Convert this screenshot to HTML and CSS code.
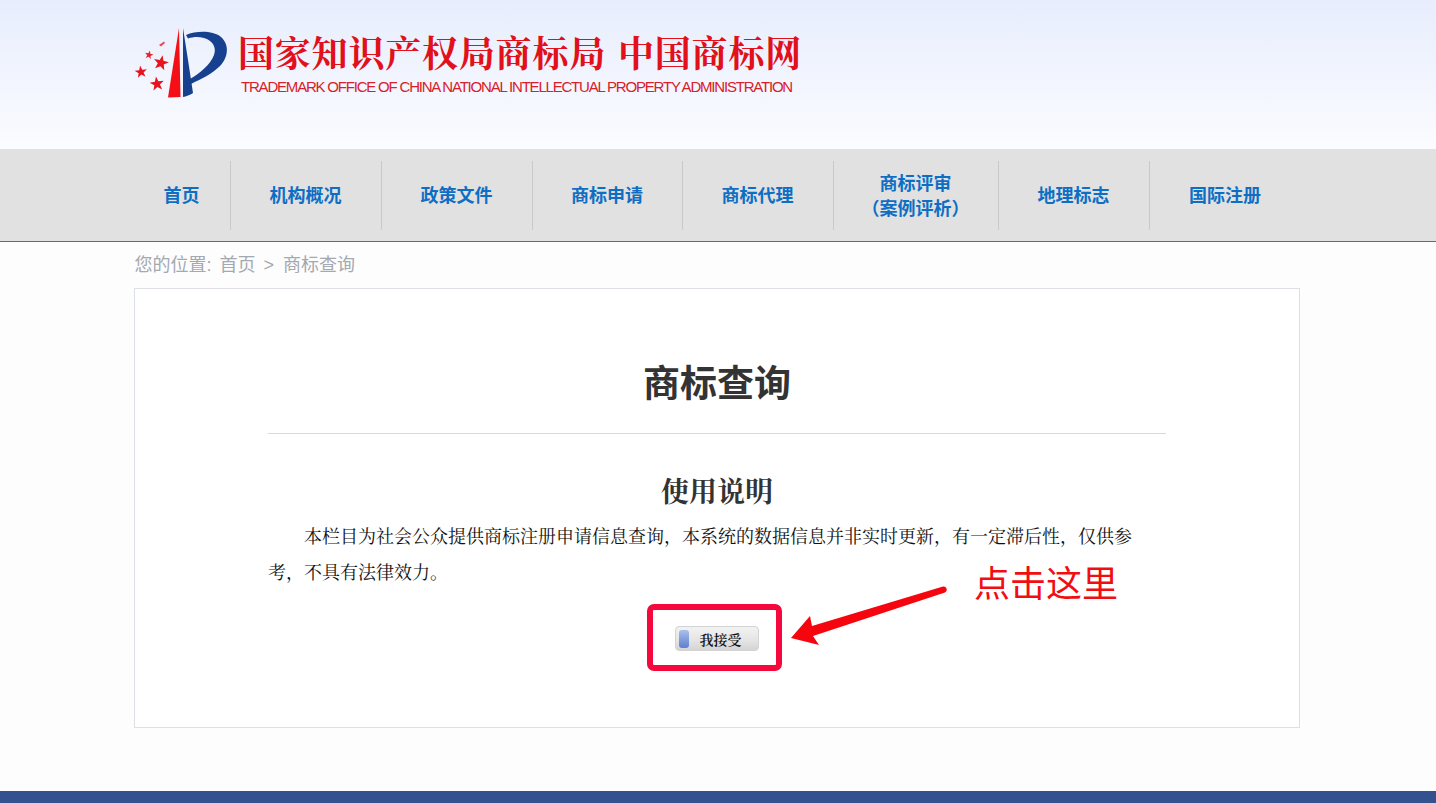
FILE: index.html
```html
<!DOCTYPE html>
<html lang="zh-CN">
<head>
<meta charset="utf-8">
<title>商标查询</title>
<link rel="stylesheet" href="styles.css">
</head>
<body>
<header class="head">
  <div class="brand">
    <svg class="logo" viewBox="0 0 96 72" width="96" height="72" aria-hidden="true">
      <defs>
        <polygon id="star" points="0,-1 .235,-.324 .951,-.309 .38,.124 .588,.809 0,.4 -.588,.809 -.38,.124 -.951,-.309 -.235,-.324"/>
      </defs>
      <path d="M45 1 L46.500 70 L34 70.500 Z" fill="#f40f17"/>
      <path d="M49 1 C52 20 56 45 59 66 C56 68 52 69.500 49 70 Z" fill="#17408f"/>
      <path d="M52 8 C62 4 78 3 87 10 C96 18 94 31 86 39 C78 47 67 52 57 57 L56 52 C66 46 76 38 80 28 C83 20 78 13 70 11 C64 9.500 59 10 54 11.500 Z" fill="#17408f"/>
      <use href="#star" transform="translate(27 36) rotate(12) scale(8)" fill="#e8141c"/>
      <use href="#star" transform="translate(15 28) rotate(12) scale(4.500)" fill="#e8242c"/>
      <use href="#star" transform="translate(7 45) rotate(-8) scale(6.500)" fill="#e8141c"/>
      <use href="#star" transform="translate(23 57) rotate(-8) scale(7.500)" fill="#e8141c"/>
      <path d="M25 18 L30 14.500 L31 16 L27 19.500 Z" fill="#ec4a50"/>
    </svg>
    <div class="brand-text">
      <div class="brand-cn"><span>国家知识产权局商标局</span><span>中国商标网</span></div>
      <div class="brand-en">TRADEMARK OFFICE OF CHINA NATIONAL INTELLECTUAL PROPERTY ADMINISTRATION</div>
    </div>
  </div>
</header>

<nav class="nav">
  <ul class="nav-list">
    <li class="nav-item w-96"><a href="#">首页</a></li>
    <li class="nav-item w-151"><a href="#">机构概况</a></li>
    <li class="nav-item w-151"><a href="#">政策文件</a></li>
    <li class="nav-item w-150"><a href="#">商标申请</a></li>
    <li class="nav-item w-151"><a href="#">商标代理</a></li>
    <li class="nav-item w-165"><a href="#">商标评审<br>（案例评析）</a></li>
    <li class="nav-item w-151"><a href="#">地理标志</a></li>
    <li class="nav-item w-151 last"><a href="#">国际注册</a></li>
  </ul>
</nav>

<main class="wrap">
  <div class="crumbs"><span>您的位置:</span><a href="#">首页</a><span>&gt;</span><a href="#">商标查询</a></div>
  <section class="box">
    <h1 class="title">商标查询</h1>
    <h2 class="subtitle">使用说明</h2>
    <p class="intro">本栏目为社会公众提供商标注册申请信息查询，本系统的数据信息并非实时更新，有一定滞后性，仅供参考，不具有法律效力。</p>
    <div class="action">
      <button class="accept" type="button"><span class="accept-cap"></span><span class="accept-label">我接受</span></button>
    </div>
    <div class="mark"></div>
    <svg class="arrow" viewBox="0 0 160 60" width="160" height="60" aria-hidden="true">
      <path d="M1 52 L20 30 L22 40 L153 .5 C157 0 158 5 155 6.500 L23 50 L29 59 Z" fill="#f5060f"/>
    </svg>
    <div class="hint">点击这里</div>
  </section>
</main>

<footer class="foot"></footer>
</body>
</html>
```
FILE: styles.css
```css
* { box-sizing: border-box; }
html, body { margin: 0; padding: 0; }
body {
  background: #fdfdfd;
  font-family: "Liberation Sans", "Noto Sans CJK SC", sans-serif;
  height: 803px;
  overflow: hidden;
  display: flex;
  flex-direction: column;
}
a { color: inherit; text-decoration: none; }

.head {
  height: 149px;
  padding: 27px 0 0 134px;
  background: linear-gradient(#e7edfd, #fbfcff);
}
.brand { display: flex; align-items: flex-start; }
.logo { flex: none; margin-right: 8px; }
.brand-text { padding-top: 2px; }
.brand-cn {
  display: flex;
  gap: 12px;
  height: 49px;
  color: #e1101a;
  font-family: "Noto Serif CJK SC", "Noto Sans CJK SC", serif;
  font-weight: 700;
  font-size: 36px;
  line-height: 46px;
  white-space: nowrap;
  letter-spacing: .8px;
}
.brand-en {
  margin: 0 0 0 3px;
  color: #d9202a;
  font-size: 15px;
  line-height: 18px;
  letter-spacing: -1.2px;
  white-space: nowrap;
}

.nav {
  height: 93px;
  padding: 12px 0 0 134px;
  background: #e1e1e1;
  border-bottom: 1px solid #1a80c8;
}
.nav-list { display: flex; list-style: none; margin: 0; padding: 0; }
.nav-item {
  height: 69px;
  display: flex;
  align-items: center;
  justify-content: center;
  padding: 2px 1px 0 0;
  text-align: center;
  border-right: 1px solid #c9c9c9;
  color: #0e6ec4;
  font-weight: 700;
  font-size: 18px;
  line-height: 25px;
}
.nav-item.last { border-right: 0; }
.w-96 { width: 97px; }
.w-150 { width: 150px; }
.w-151 { width: 151px; }
.w-165 { width: 165px; }

.wrap { flex: 1; padding: 0 0 0 134px; }
.crumbs {
  display: flex;
  gap: 8px;
  height: 46px;
  padding-left: .5px;
  color: #a4a8b0;
  font-size: 18px;
  line-height: 46px;
}
.crumbs a:last-child { margin-left: 1px; }
.box {
  position: relative;
  width: 1166px;
  height: 440px;
  padding: 0 133px;
  background: #fff;
  border: 1px solid #dcdfe4;
}
.title {
  margin: 0;
  height: 145px;
  padding-top: 70px;
  text-align: center;
  color: #333;
  font-size: 37px;
  line-height: 52px;
  font-weight: 700;
  border-bottom: 1px solid #d9d9d9;
}
.subtitle {
  margin: 35px 0 0;
  text-align: center;
  color: #333;
  font-family: "Noto Serif CJK SC", "Noto Sans CJK SC", serif;
  font-size: 28px;
  line-height: 42px;
  font-weight: 700;
}
.intro {
  margin: 6px 0 0;
  color: #111;
  font-family: "Noto Serif CJK SC", "Noto Sans CJK SC", serif;
  font-size: 18px;
  line-height: 36px;
  text-indent: 36px;
}
.action { display: flex; justify-content: center; margin-top: 37px; }
.accept {
  display: flex;
  align-items: center;
  width: 84px;
  height: 25px;
  padding: 2px 2px 2px 3px;
  border: 1px solid #d3d3d3;
  border-radius: 4px;
  background: linear-gradient(#f2f2f2, #e4e4e4 60%, #d4d4d4);
  font-family: "Noto Serif CJK SC", "Noto Sans CJK SC", serif;
  font-size: 14px;
  font-weight: 600;
  color: #111;
  cursor: pointer;
}
.accept-cap {
  flex: none;
  width: 10px;
  height: 18px;
  border-radius: 3px;
  background: linear-gradient(#a9bfec, #5f7fd0);
}
.accept-label { flex: 1; padding-right: 4px; text-align: center; line-height: 16px; }

.mark {
  position: absolute;
  left: 512px;
  top: 315px;
  width: 135px;
  height: 67px;
  border: 6px solid #f5083c;
  border-radius: 7px;
}
.arrow { position: absolute; left: 655px; top: 297px; }
.hint {
  position: absolute;
  left: 839px;
  top: 270px;
  color: #f10d12;
  font-size: 36px;
  line-height: 52px;
  white-space: nowrap;
}
.foot { height: 12px; background: #33508f; }
```
